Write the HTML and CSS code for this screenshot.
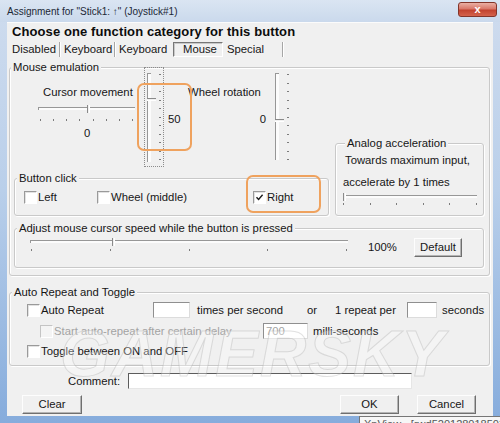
FILE: index.html
```html
<!DOCTYPE html>
<html>
<head>
<meta charset="utf-8">
<title>Assignment</title>
<link rel="stylesheet" href="styles.css">
</head>
<body>
<div class="window">
  <div class="titlebar">
    <span class="title">Assignment for "Stick1: ↑" (Joystick#1)</span>
    <span class="close">x</span>
  </div>
  <div class="client">
    <div class="heading">Choose one function category for this button</div>
    <div class="tabs">
      <span class="tab t1">Disabled</span>
      <span class="tab t2">Keyboard</span>
      <span class="tab t3">Keyboard</span>
      <span class="tab t4">Mouse</span>
      <span class="tab t5">Special</span>
    </div>

    <div class="group emu">
      <div class="legend">Mouse emulation</div>
      <div class="emu-body">
        <div class="emu-left">
          <div class="emu-top">
            <div class="cursor">
              <div class="lbl">Cursor movement</div>
              <div class="hslider cursor-slider">
                <div class="track-h"></div>
                <div class="thumb-h" style="left:49px"></div>
              </div>
              <div class="ticks ticks-h ticks-cursor">
                <span></span><span></span><span></span><span></span><span></span><span></span><span></span><span></span>
              </div>
              <div class="val0">0</div>
            </div>
            <div class="vslider vs1">
              <div class="track-v t-v1">
                <div class="thumb-v" style="top:24px"></div>
              </div>
              <div class="ticks ticks-v">
                <span></span><span></span><span></span><span></span><span></span><span></span><span></span><span></span><span></span><span></span><span></span>
              </div>
            </div>
            <div class="val50">50</div>
            <div class="wheel">
              <div class="lbl wl">Wheel rotation</div>
              <div class="wval">0</div>
            </div>
            <div class="vslider vs2">
              <div class="track-v t-v2">
                <div class="thumb-v" style="top:45px"></div>
              </div>
              <div class="ticks ticks-v">
                <span></span><span></span><span></span><span></span><span></span><span></span><span></span><span></span><span></span><span></span><span></span>
              </div>
            </div>
          </div>
          <div class="group click">
            <div class="legend">Button click</div>
            <div class="checks">
              <span class="chk c-left"><span class="box"></span>Left</span>
              <span class="chk c-wheel"><span class="box"></span>Wheel (middle)</span>
              <span class="chk c-right"><span class="box checked"><svg width="9" height="9" viewBox="0 0 9 9"><path d="M1.5 4.2 L3.6 6.4 L7.6 1.8" fill="none" stroke="#1a1a1a" stroke-width="1.4"/></svg></span>Right</span>
            </div>
          </div>
        </div>
        <div class="group analog">
          <div class="legend">Analog acceleration</div>
          <div class="an-l1">Towards maximum input,</div>
          <div class="an-l2">accelerate by 1 times</div>
          <div class="hslider an-slider">
            <div class="track-h"></div>
            <div class="thumb-h" style="left:0px"></div>
          </div>
          <div class="ticks ticks-h ticks-an">
            <span></span><span></span><span></span><span></span><span></span><span></span>
          </div>
        </div>
      </div>
      <div class="group adjust">
        <div class="legend">Adjust mouse cursor speed while the button is pressed</div>
        <div class="adj-row">
          <div class="adj-col">
            <div class="hslider">
              <div class="track-h"></div>
              <div class="thumb-h" style="left:82px"></div>
            </div>
            <div class="ticks ticks-h ticks-adj">
              <span></span><span></span><span></span><span></span><span></span>
            </div>
          </div>
          <div class="pct">100%</div>
          <div class="btn btn-default">Default</div>
        </div>
      </div>
    </div>

    <div class="group auto">
      <div class="legend">Auto Repeat and Toggle</div>
      <div class="ar-row r1">
        <span class="chk ar-c1"><span class="box"></span>Auto Repeat</span>
        <span class="tb tb1"></span>
        <span class="tps">times per second</span>
        <span class="or">or</span>
        <span class="rep">1 repeat per</span>
        <span class="tb tb2"></span>
        <span class="secs">seconds</span>
      </div>
      <div class="ar-row r2">
        <span class="chk ar-c2 disabled"><span class="box"></span>Start auto-repeat after certain delay</span>
        <span class="tb tb3">700</span>
        <span class="milli">milli-seconds</span>
      </div>
      <div class="ar-row r3">
        <span class="chk"><span class="box"></span>Toggle between ON and OFF</span>
      </div>
    </div>

    <div class="comment-row">
      <span class="clabel">Comment:</span>
      <span class="tb ctb"></span>
    </div>

    <div class="btn-row">
      <span class="btn b-clear">Clear</span>
      <span class="btn b-ok">OK</span>
      <span class="btn b-cancel">Cancel</span>
    </div>

    <div class="watermark">GAMERSKY</div>
    <div class="annot a1"></div>
    <div class="annot a2"></div>
  </div>
  <div class="tooltip">XnView - [rwd520128018502.jpg]</div>
</div>
</body>
</html>
```

FILE: styles.css
```css
* { box-sizing: border-box; }
html, body { margin: 0; padding: 0; }
body {
  width: 500px; height: 423px; overflow: hidden;
  font-family: "Liberation Sans", Arial, sans-serif;
  font-size: 11.3px; color: #161616; background: #fff;
}

.window {
  position: relative; width: 500px; height: 423px;
  display: flex; flex-direction: column; overflow: hidden;
  background: linear-gradient(180deg, #cfdcee 0%, #b9cfea 45%, #86acdc 100%);
}
.titlebar {
  flex: none; height: 22px; display: flex; align-items: flex-start;
  padding: 0 3px 0 7px;
  background: linear-gradient(180deg, #dae5f2 0%, #cad9ec 100%);
}
.title { font-size: 10px; line-height: 12px; margin-top: 6px; color: #1c2836; white-space: nowrap; }
.close {
  margin-left: auto; margin-top: 2px; width: 39px; height: 15px;
  border: 1px solid #83352a; border-radius: 3px;
  background: linear-gradient(180deg, #eab0a4 0%, #d9786a 45%, #c2432f 55%, #d4634c 100%);
  color: #fff; font: bold 11px/12px "Liberation Sans", sans-serif; text-align: center;
}

.client {
  position: relative; flex: none; width: 486px; height: 394px; margin-left: 7px;
  background: #f0f0f0; box-shadow: inset 0 1px 0 #fbfbfb;
}

.heading {
  height: 18px; padding: 2px 0 0 5px;
  font-weight: bold; font-size: 13px; line-height: 16px; letter-spacing: 0.1px; color: #0c0c0c;
}

.tabs { display: flex; height: 15px; margin-top: 2px; padding-left: 5px; line-height: 15px; }
.tab { flex: none; white-space: nowrap; }
.t1 { width: 48px; border-right: 1px solid #a6a6a6; box-shadow: 1px 0 0 #fff; }
.t2 { width: 55px; padding-left: 4px; border-right: 1px solid #a6a6a6; box-shadow: 1px 0 0 #fff; }
.t3 { width: 58px; padding-left: 4px; }
.t4 { width: 50px; padding-left: 9px; line-height: 13px; border: 1px solid; border-color: #777 #fff #fff #777; box-shadow: inset 1px 1px 0 #c8c8c8; }
.t5 { width: 60px; padding-left: 4px; border-right: 1px solid #a6a6a6; box-shadow: 1px 0 0 #fff; }

.group {
  border: 1px solid #c9c9c9; border-radius: 3px;
  box-shadow: inset 1px 1px 0 #fff, 1px 1px 0 #fff;
}
.legend {
  position: relative; z-index: 1;
  width: max-content; margin: -8px 0 -6px 2px; padding: 0 2px;
  line-height: 14px; background: #f0f0f0; white-space: nowrap;
}

.emu { margin: 10px 3px 0 2px; padding-bottom: 7px; }
.emu > .legend { margin-left: 1px; padding: 0 2px; }
.emu-body { display: flex; }
.emu-left { flex: none; width: 320px; }
.emu-top { display: flex; align-items: flex-start; height: 110px; }

.cursor { flex: none; margin-left: 28px; width: 97px; }
.lbl { margin-top: 17px; padding-left: 5px; line-height: 14px; white-space: nowrap; }
.hslider { position: relative; height: 6px; }
.track-h { height: 3px; border-top: 1px solid #979797; border-left: 1px solid #979797; background: #fcfcfc; }
.thumb-h {
  position: absolute; top: -2px; width: 3px; height: 8px;
  border-left: 1px solid #8a8a8a; border-right: 1px solid #fff; background: #f0f0f0;
}
.cursor-slider { margin-top: 8px; }
.ticks { display: flex; justify-content: space-between; }
.ticks-h { height: 2px; }
.ticks-h span { width: 1px; height: 2px; background: #7c7c7c; }
.ticks-cursor { margin-top: 6px; padding: 0 2px; }
.val0 { margin-top: 5px; padding-left: 46px; line-height: 14px; }

.vslider { flex: none; position: relative; display: flex; align-items: flex-start; }
.vs1 { margin: -1px 0 0 9px; width: 20px; height: 100px; border: 1px dotted #8c8c8c; }
.vs2 { margin: 0 0 0 4px; width: 20px; height: 98px; }
.track-v {
  position: relative; flex: none; width: 4px;
  border-left: 1px solid #979797; border-top: 1px solid #979797; background: #fcfcfc;
}
.t-v1 { margin: 5px 0 0 2px; height: 89px; }
.t-v2 { margin: 5px 0 0 5px; height: 87px; }
.thumb-v {
  position: absolute; left: -1px; width: 9px; height: 3px;
  border-top: 1px solid #8a8a8a; border-bottom: 1px solid #fff; background: #f0f0f0;
}
.ticks-v { flex-direction: column; flex: none; margin: 6px 0 0 8px; width: 2px; height: 86px; }
.ticks-v span { width: 2px; height: 1px; background: #7c7c7c; }

.val50 { flex: none; width: 13px; margin: 44px 0 0 4px; line-height: 14px; }
.wheel { flex: none; width: 78px; margin-left: 7px; }
.wl { padding-left: 0; }
.wval { margin-top: 13px; line-height: 14px; text-align: right; }

.click { margin-left: 4px; width: 315px; height: 38px; }
.checks { display: flex; align-items: center; height: 14px; margin-top: 11px; padding-left: 9px; line-height: 14px; }
.chk { display: flex; align-items: center; flex: none; white-space: nowrap; }
.box {
  flex: none; display: flex; align-items: center; justify-content: center;
  width: 13px; height: 13px; margin-right: 1px;
  border: 1px solid; border-color: #9a9a9a #fff #fff #9a9a9a;
  background: #fff; box-shadow: inset 1px 1px 0 #e2e2e2;
}
.c-left { width: 73px; }
.c-wheel { width: 156px; }

.analog { flex: none; margin: 75px 0 0 5px; width: 149px; height: 73px; padding-left: 7px; }
.an-l1 { margin-top: 9px; padding-left: 2px; line-height: 14px; white-space: nowrap; }
.an-l2 { margin-top: 8px; line-height: 14px; white-space: nowrap; }
.an-slider { margin-top: 6px; width: 134px; }
.ticks-an { margin-top: 2px; width: 134px; }

.adjust { margin: 12px 0 0 4px; width: 470px; height: 40px; }
.adj-row { display: flex; align-items: flex-start; }
.adj-col { flex: none; margin: 11px 0 0 15px; width: 318px; }
.ticks-adj { margin-top: 3px; padding: 0 1px; }
.pct { flex: none; width: 46px; margin: 11px 0 0 20px; line-height: 14px; }

.btn {
  flex: none; display: block; height: 19px;
  border: 1px solid; border-color: #fdfdfd #6f6f6f #6f6f6f #fdfdfd;
  box-shadow: inset -1px -1px 0 #b4b4b4;
  background: #f0f0f0; line-height: 16px; text-align: center;
}
.btn-default { margin-top: 9px; width: 48px; }

.auto { margin: 16px 3px 0 2px; height: 74px; }
.ar-row { display: flex; align-items: center; height: 16px; line-height: 14px; white-space: nowrap; }
.r1 { margin-top: 9px; padding-left: 17px; }
.r2 { margin-top: 5px; padding-left: 30px; }
.r3 { margin-top: 5px; padding-left: 17px; height: 14px; }
.ar-c1 { width: 126px; }
.tb {
  flex: none; display: block; height: 16px; background: #fff;
  border: 1px solid; border-color: #8f8f8f #dcdcdc #dcdcdc #8f8f8f;
}
.tb1 { width: 37px; }
.tps { flex: none; width: 110px; margin-left: 7px; }
.or { flex: none; width: 28px; }
.rep { flex: none; width: 72px; }
.tb2 { width: 30px; }
.secs { margin-left: 5px; }
.ar-c2 { width: 223px; color: #a3a3a3; }
.disabled .box { border-color: #c4c4c4 #fff #fff #c4c4c4; background: #f4f4f4; box-shadow: none; }
.tb3 { width: 45px; padding-left: 2px; line-height: 14px; color: #a3a3a3; }
.milli { margin-left: 5px; }

.comment-row { display: flex; align-items: center; height: 16px; margin-top: 7px; padding-left: 61px; line-height: 14px; }
.clabel { flex: none; width: 60px; }
.ctb { width: 284px; border-color: #5c5c5c #e6e6e6 #e6e6e6 #5c5c5c; }

.btn-row { display: flex; margin-top: 6px; padding: 0 17px 0 15px; }
.b-clear { width: 60px; }
.b-ok { width: 59px; margin-left: auto; }
.b-cancel { width: 59px; margin-left: 18px; }

.watermark {
  position: absolute; left: 53px; top: 300px;
  font: italic bold 64px/64px "Liberation Sans", sans-serif; letter-spacing: 2px;
  color: rgba(255,255,255,0.3);
  -webkit-text-stroke: 1px rgba(170,170,170,0.35);
  pointer-events: none; white-space: nowrap;
}
.annot {
  position: absolute; border: 2px solid #efa25e; border-radius: 7px; pointer-events: none;
}
.a1 { left: 130px; top: 61px; width: 55px; height: 68px; }
.a2 { left: 239px; top: 153px; width: 75px; height: 38px; }

.tooltip {
  position: absolute; left: 359px; top: 416px; height: 16px;
  padding: 0 4px; border: 1px solid #767676; background: #f6f6f6;
  font-size: 11px; line-height: 14px; color: #555; white-space: nowrap;
}
```
